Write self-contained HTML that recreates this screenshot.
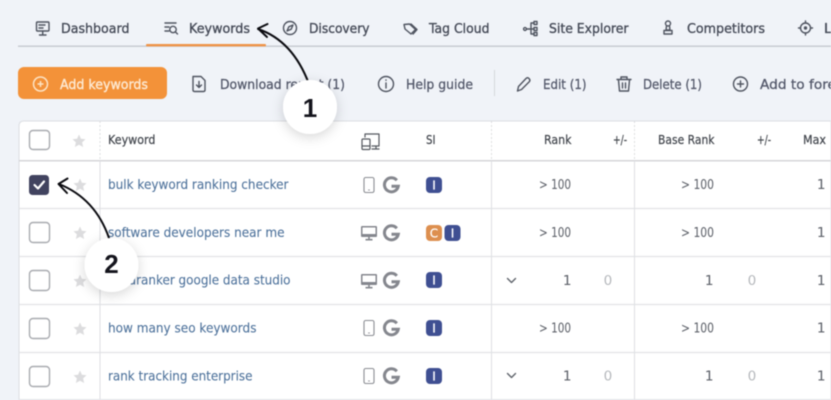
<!DOCTYPE html>
<html><head><meta charset="utf-8"><style>
html,body{margin:0;padding:0;width:831px;height:400px;overflow:hidden;background:#f0f3f8}
svg{display:block;filter:blur(.4px)}
text{font-family:"DejaVu Sans","Liberation Sans",sans-serif;font-size:13.6px}
.n{fill:#474c59;stroke:#474c59;stroke-width:.35}
.t{fill:#53586a;stroke:#53586a;stroke-width:.28}
.h{font-size:12.2px;fill:#44484f;stroke:#44484f;stroke-width:.22}
.k{fill:#4f739c;stroke:#4f739c;stroke-width:.1}
.v{fill:#5f636b;stroke:#5f636b;stroke-width:.05}
.z{fill:#b5b8bc}
.i{fill:none;stroke:#4f5460;stroke-width:1.4;stroke-linecap:round;stroke-linejoin:round}
.l{stroke:#e2e3e6;stroke-width:1.3}
.box{fill:#fff;stroke:#a9abb0;stroke-width:1.4}
.b{font-size:12px;fill:#fff;stroke:#fff;stroke-width:.2}
</style></head><body>
<svg width="831" height="400" viewBox="0 0 831 400" xmlns="http://www.w3.org/2000/svg">
<defs>
<filter id="s" x="-40%" y="-40%" width="180%" height="180%"><feDropShadow dx="0" dy="3" stdDeviation="6" flood-color="#000" flood-opacity=".16"/></filter>
<path id="st" d="M0-6.500 1.900-2.200 6.500-1.700 3.100 1.400 4.100 6 0 3.700-4.100 6-3.100 1.400-6.500-1.700-1.900-2.200Z" fill="#dcdcde"/>
<g id="ph" fill="none" stroke="#8b8d93"><rect x="-5" y="-7.500" width="10" height="15" rx="1.600" stroke-width="1.100"/><path d="M-.8 5H.8" stroke-width="1"/></g>
<g id="mo"><rect x="-8" y="-7" width="16" height="11" rx="1" fill="#85878e"/><rect x="-6.500" y="-5.500" width="13" height="6.500" fill="#fff"/><path d="M0 4V6.500M-3.500 6.700H3.500" stroke="#85878e" stroke-width="1.600"/></g>
<path id="G" d="M5.300-4.700A7 7 0 1 0 6.800 1.200H0" fill="none" stroke="#85878e" stroke-width="3"/>
<path id="chev" d="M-4-2 0 2 4-2" fill="none" stroke="#5f636b" stroke-width="1.400" stroke-linecap="round" stroke-linejoin="round"/>
</defs>

<!-- nav -->
<rect x="18" y="45.600" width="813" height="1.200" fill="#bfc3c8"/>
<rect x="146" y="44" width="120" height="2.400" rx="1" fill="#ef9346"/>
<g class="i"><rect x="36.500" y="22" width="12.500" height="9" rx="1"/><path d="M39 25H45M39 28H43M42.700 31V34.500M39.500 35H46"/></g>
<text x="61" y="33" class="n" textLength="68.500" lengthAdjust="spacingAndGlyphs">Dashboard</text>
<g class="i"><path d="M165 23H176M165 27H169M165 31H169"/><circle cx="173" cy="29.500" r="3.200"/><path d="M175.500 32 177.500 34"/></g>
<text x="189" y="33" class="n" textLength="61" lengthAdjust="spacingAndGlyphs">Keywords</text>
<g class="i" stroke-width="1.200"><circle cx="290" cy="28" r="6.500"/><path d="M293 25 288.800 26.800 287 31 291.200 29.200Z"/></g>
<text x="309" y="33" class="n" textLength="60.500" lengthAdjust="spacingAndGlyphs">Discovery</text>
<g class="i"><path d="M404 24.500 409.500 24 415.500 29.500 411 34 405 29Z"/><path d="M411 24 417 29.500 413 34"/></g>
<text x="429" y="33" class="n" textLength="60.500" lengthAdjust="spacingAndGlyphs">Tag Cloud</text>
<g class="i" stroke-width="1.200"><circle cx="525" cy="29" r="1.400"/><path d="M527 29H531M531 23V34M531 23H534M531 29H534M531 34H534"/><rect x="534" y="21.500" width="3" height="3"/><rect x="534" y="27.500" width="3" height="3"/><rect x="534" y="32.500" width="3" height="3"/></g>
<text x="549" y="33" class="n" textLength="79.500" lengthAdjust="spacingAndGlyphs">Site Explorer</text>
<g class="i" stroke-width="1.300"><circle cx="668" cy="23.500" r="2.500"/><path d="M666.500 26 666 30H670L669.500 26M664 30.500H672V34H664Z"/></g>
<text x="687" y="33" class="n" textLength="78" lengthAdjust="spacingAndGlyphs">Competitors</text>
<g class="i" stroke-width="1.300"><circle cx="805.500" cy="28" r="5"/><circle cx="805.500" cy="28" r="1" fill="#4f5460"/><path d="M805.500 21V23M805.500 33V35M798.500 28H800.500M810.500 28H812.500"/></g>
<text x="824" y="33" class="n">L</text>

<!-- toolbar -->
<rect x="18" y="67" width="149" height="32" rx="6" fill="#f39239"/>
<circle cx="40.500" cy="84" r="7" fill="none" stroke="#fde3c4" stroke-width="1.500"/>
<path d="M37.500 84H43.500M40.500 81V87" stroke="#fde3c4" stroke-width="1.500"/>
<text x="60" y="89" style="fill:#fde8d0;stroke:#fde8d0;stroke-width:.4" textLength="88" lengthAdjust="spacingAndGlyphs">Add keywords</text>
<g class="i"><path d="M193 76.500H201L205 80.500V90Q205 91.500 203.500 91.500H194.500Q193 91.500 193 90Z"/><path d="M199 81.500V87M196.500 85 199 87.500 201.500 85"/></g>
<text x="220" y="89" class="t" textLength="125" lengthAdjust="spacingAndGlyphs">Download report (1)</text>
<g class="i" stroke-width="1.500"><circle cx="386" cy="84" r="7.500"/><path d="M386 83V88M386 80V80.300"/></g>
<text x="406" y="89" class="t" textLength="67" lengthAdjust="spacingAndGlyphs">Help guide</text>
<rect x="494" y="70" width="1" height="26" fill="#d5d8dc"/>
<g class="i"><path d="M517.500 91 518.500 86.500 526 78.500Q527.500 77 529 78.500T529.500 81.500L521.500 89.500Z"/></g>
<text x="543" y="89" class="t" textLength="43.500" lengthAdjust="spacingAndGlyphs">Edit (1)</text>
<g class="i"><path d="M617 79.500H631M621 79V77H627V79M618.500 80 619.500 91H628.500L629.500 80M622.500 83V88M625.500 83V88"/></g>
<text x="643" y="89" class="t" textLength="59" lengthAdjust="spacingAndGlyphs">Delete (1)</text>
<g class="i" stroke-width="1.400"><circle cx="740.500" cy="84" r="7"/><path d="M737.500 84H743.500M740.500 81V87"/></g>
<text x="760" y="89" class="t" textLength="76" lengthAdjust="spacingAndGlyphs">Add to fore</text>

<!-- table -->
<path d="M24 121H831V400H19V126Q19 121 24 121Z" fill="#fff" stroke="#dcdee2" stroke-width="1"/>
<rect x="19" y="160" width="812" height="1.500" fill="#d5d6d9"/>
<line class="l" x1="19" y1="208.500" x2="831" y2="208.500"/>
<line class="l" x1="19" y1="256.500" x2="831" y2="256.500"/>
<line class="l" x1="19" y1="304.500" x2="831" y2="304.500"/>
<line class="l" x1="19" y1="352.500" x2="831" y2="352.500"/>
<line class="l" x1="19" y1="399.600" x2="831" y2="399.600"/>
<path d="M100 121V160M491.500 121V160M634.500 121V160" stroke="#dcdde0" stroke-dasharray="2 2"/>
<path d="M100 161V400M491.500 161V400M634.500 161V400" stroke="#e0e1e4" stroke-width="1.100"/>

<!-- header -->
<rect x="29.500" y="130.500" width="20" height="19" rx="3.500" class="box"/>
<use href="#st" x="79" y="141"/>
<text x="108" y="144" class="h" textLength="47.500" lengthAdjust="spacingAndGlyphs">Keyword</text>
<g class="i" style="stroke:#55585f;stroke-width:1.200"><path d="M365 137V134H379V146H372M372 149H379M376 146V149"/><rect x="362" y="139" width="8" height="10.500" rx="1"/><path d="M362 146H370"/></g>
<text x="426" y="144" class="h" textLength="9.500" lengthAdjust="spacingAndGlyphs">SI</text>
<text x="544" y="144" class="h" textLength="27.500" lengthAdjust="spacingAndGlyphs">Rank</text>
<text x="613" y="144" class="h" textLength="14" lengthAdjust="spacingAndGlyphs">+/-</text>
<text x="658" y="144" class="h" textLength="56.500" lengthAdjust="spacingAndGlyphs">Base Rank</text>
<text x="757" y="144" class="h" textLength="14" lengthAdjust="spacingAndGlyphs">+/-</text>
<text x="803" y="144" class="h" textLength="23" lengthAdjust="spacingAndGlyphs">Max</text>

<!-- row 1 -->
<rect x="29" y="175" width="20" height="20" rx="3.500" fill="#41435f"/>
<path d="M34.500 185 38 188.500 44 181.500" fill="none" stroke="#fff" stroke-width="2.200" stroke-linecap="round" stroke-linejoin="round"/>
<use href="#st" x="80" y="185"/>
<text x="108" y="189" class="k" textLength="180.500" lengthAdjust="spacingAndGlyphs">bulk keyword ranking checker</text>
<use href="#ph" x="369" y="185"/>
<use href="#G" x="391.500" y="185"/>
<rect x="426" y="177" width="16" height="16" rx="4" fill="#3f4f92"/><text x="434" y="189.500" class="b" text-anchor="middle">I</text>
<text x="539" y="189" class="v" textLength="32" lengthAdjust="spacingAndGlyphs">&gt; 100</text>
<text x="681" y="189" class="v" textLength="33" lengthAdjust="spacingAndGlyphs">&gt; 100</text>
<text x="825.500" y="189" class="v" text-anchor="end">1</text>

<!-- row 2 -->
<rect x="29.500" y="222.500" width="20" height="20" rx="3.500" class="box"/>
<use href="#st" x="80" y="233"/>
<text x="108" y="237" class="k" textLength="176.500" lengthAdjust="spacingAndGlyphs">software developers near me</text>
<use href="#mo" x="369" y="233"/>
<use href="#G" x="391.500" y="233"/>
<rect x="426" y="225" width="16" height="16" rx="4" fill="#dd8f4f"/><text x="434" y="237.500" class="b" text-anchor="middle">C</text>
<rect x="444.500" y="225" width="16" height="16" rx="4" fill="#3f4f92"/><text x="452.500" y="237.500" class="b" text-anchor="middle">I</text>
<text x="539" y="237" class="v" textLength="32" lengthAdjust="spacingAndGlyphs">&gt; 100</text>
<text x="681" y="237" class="v" textLength="33" lengthAdjust="spacingAndGlyphs">&gt; 100</text>
<text x="825.500" y="237" class="v" text-anchor="end">1</text>

<!-- row 3 -->
<rect x="29.500" y="270.500" width="20" height="20" rx="3.500" class="box"/>
<use href="#st" x="80" y="281"/>
<text x="108" y="284.500" class="k" textLength="182.500" lengthAdjust="spacingAndGlyphs">accuranker google data studio</text>
<use href="#mo" x="369" y="281"/>
<use href="#G" x="391.500" y="280.500"/>
<rect x="426" y="272" width="16" height="16" rx="4" fill="#3f4f92"/><text x="434" y="284.500" class="b" text-anchor="middle">I</text>
<use href="#chev" x="511.500" y="280.500"/>
<text x="571.500" y="285" class="v" text-anchor="end">1</text>
<text x="608" y="285" class="z" text-anchor="middle">0</text>
<text x="713.500" y="285" class="v" text-anchor="end">1</text>
<text x="752" y="285" class="z" text-anchor="middle">0</text>
<text x="825.500" y="285" class="v" text-anchor="end">1</text>

<!-- row 4 -->
<rect x="29.500" y="318.500" width="20" height="20" rx="3.500" class="box"/>
<use href="#st" x="80" y="329"/>
<text x="108" y="332.500" class="k" textLength="148.500" lengthAdjust="spacingAndGlyphs">how many seo keywords</text>
<use href="#ph" x="369" y="328"/>
<use href="#G" x="391.500" y="328"/>
<rect x="426" y="320" width="16" height="16" rx="4" fill="#3f4f92"/><text x="434" y="332.500" class="b" text-anchor="middle">I</text>
<text x="539" y="332.500" class="v" textLength="32" lengthAdjust="spacingAndGlyphs">&gt; 100</text>
<text x="681" y="332.500" class="v" textLength="33" lengthAdjust="spacingAndGlyphs">&gt; 100</text>
<text x="825.500" y="332.500" class="v" text-anchor="end">1</text>

<!-- row 5 -->
<rect x="29.500" y="366.500" width="20" height="20" rx="3.500" class="box"/>
<use href="#st" x="80" y="377"/>
<text x="108" y="380.500" class="k" textLength="144.500" lengthAdjust="spacingAndGlyphs">rank tracking enterprise</text>
<use href="#ph" x="369" y="376"/>
<use href="#G" x="391.500" y="376"/>
<rect x="426" y="368" width="16" height="16" rx="4" fill="#3f4f92"/><text x="434" y="380.500" class="b" text-anchor="middle">I</text>
<use href="#chev" x="511.500" y="375.500"/>
<text x="571.500" y="380.500" class="v" text-anchor="end">1</text>
<text x="608" y="380.500" class="z" text-anchor="middle">0</text>
<text x="713.500" y="380.500" class="v" text-anchor="end">1</text>
<text x="752" y="380.500" class="z" text-anchor="middle">0</text>
<text x="825.500" y="380.500" class="v" text-anchor="end">1</text>

<!-- annotations -->
<path d="M309 84C300 60 285 38 258 29M267.500 24 258 28.500 267 37" fill="none" stroke="#0b0b10" stroke-width="2" stroke-linecap="round" stroke-linejoin="round"/>
<path d="M109 238C100 212 84 194 59 184M67.500 178.500 58.500 184 67 193" fill="none" stroke="#0b0b10" stroke-width="2" stroke-linecap="round" stroke-linejoin="round"/>
<circle cx="310" cy="107" r="27" fill="#fff" filter="url(#s)"/>
<circle cx="111.500" cy="265" r="27" fill="#fff" filter="url(#s)"/>
<text x="310" y="117" text-anchor="middle" style="font-family:'Liberation Sans',sans-serif;font-weight:700;font-size:26px;fill:#14141c">1</text>
<text x="111.500" y="273" text-anchor="middle" style="font-family:'Liberation Sans',sans-serif;font-weight:700;font-size:26px;fill:#14141c">2</text>
</svg>
</body></html>
